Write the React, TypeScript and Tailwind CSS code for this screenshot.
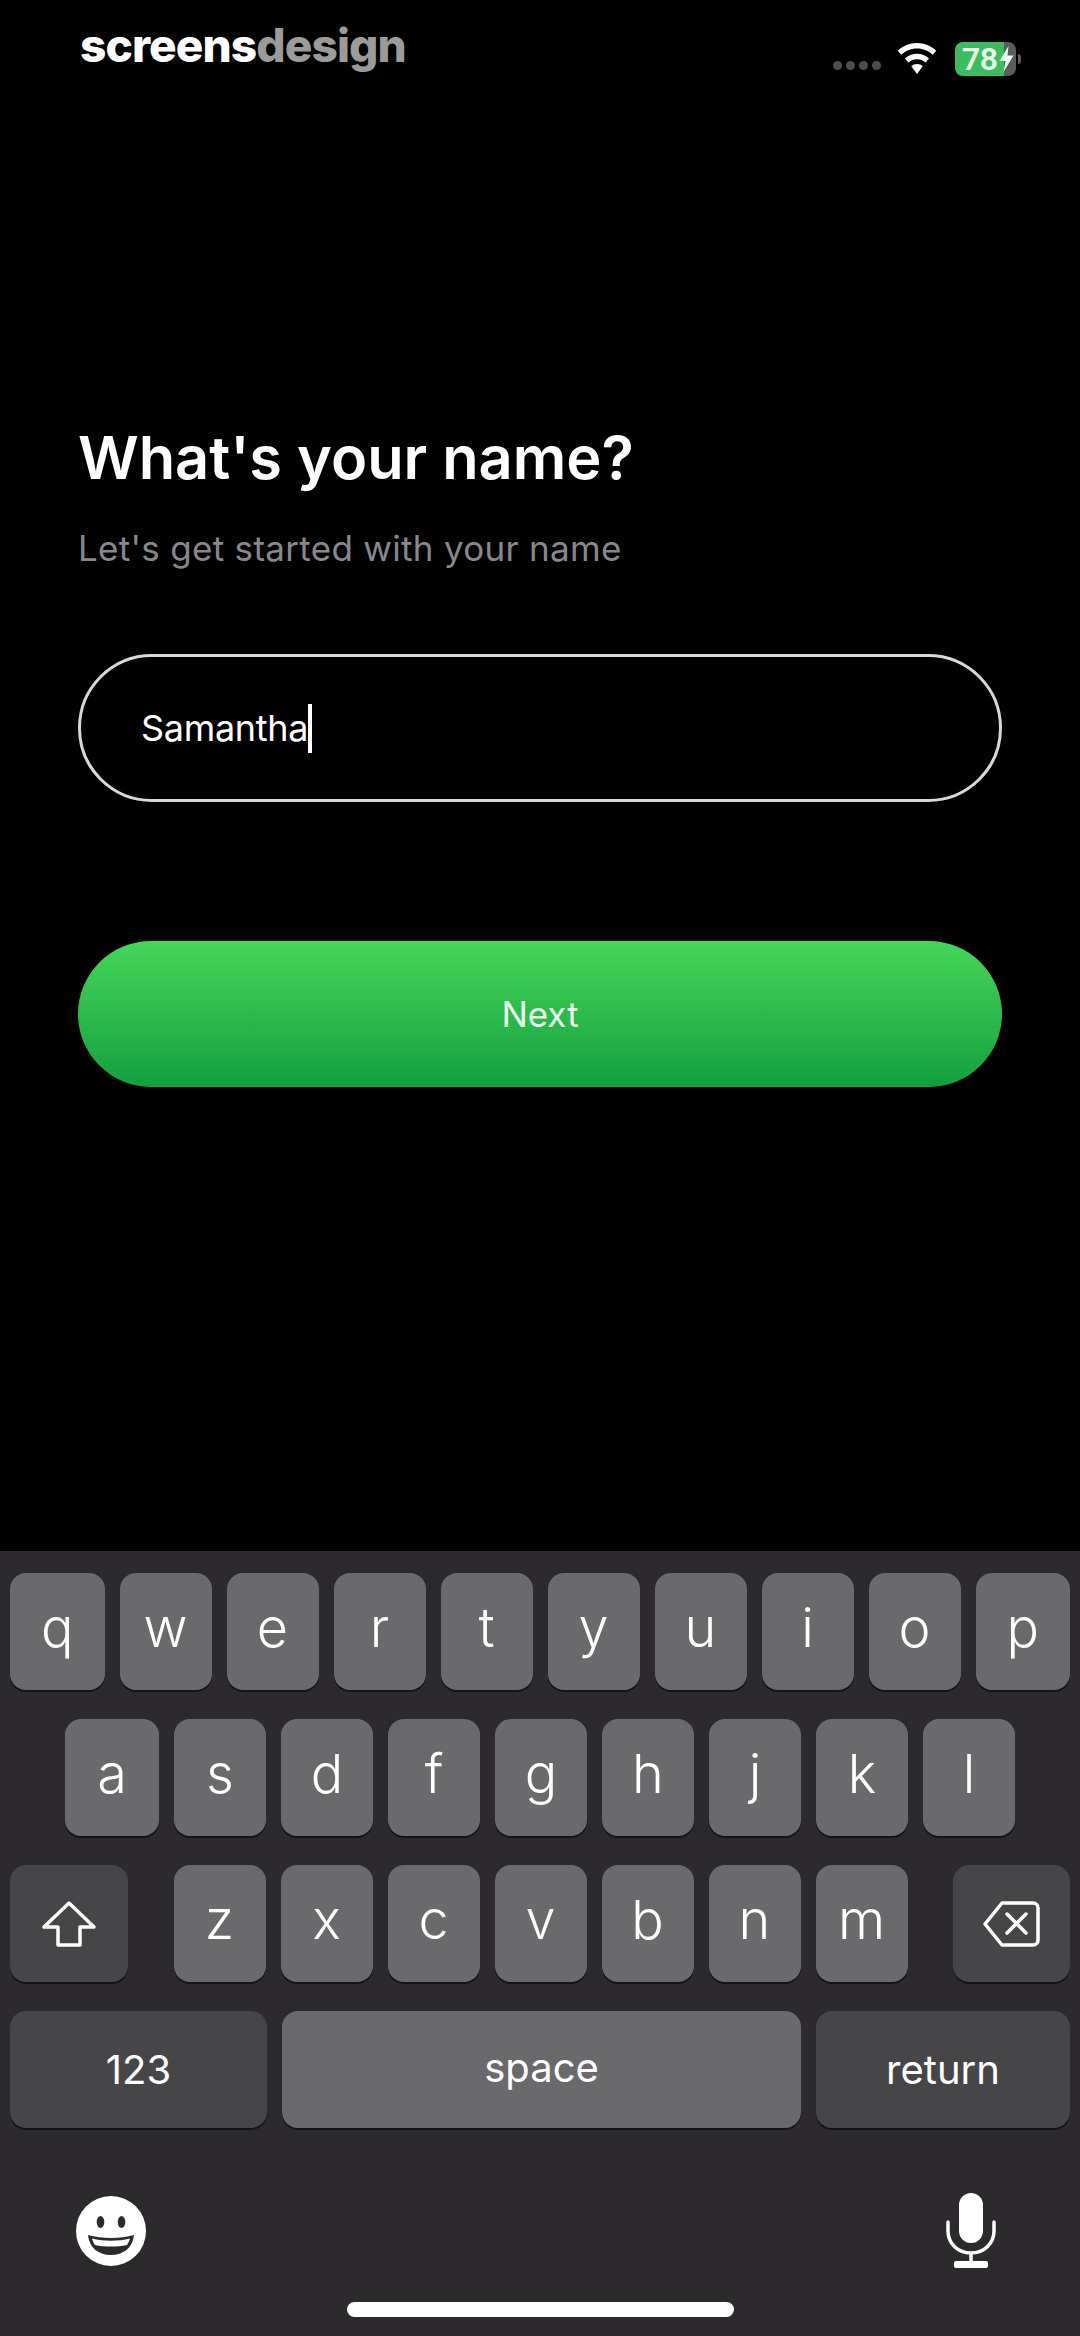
const row1 = ['w', 'e', 'r', 't', 'y', 'u', 'i', 'o']
const row2 = ['s', 'd', 'f', 'g', 'h', 'j', 'k', 'l']
const row3 = ['z', 'x', 'c', 'v', 'b', 'n', 'm']

function LetterKey({ label, className = 'w-[92px]' }: { label: string; className?: string }) {
  return (
    <div
      className={`${className} h-[117px] bg-[#6a696c] rounded-[16px] shadow-[0_2px_0_#141315] flex items-center justify-center text-[54px] font-light text-white pb-[8px]`}
    >
      {label}
    </div>
  )
}

function WifiIcon() {
  return (
    <svg width="40" height="32" viewBox="0 0 40 32" fill="#fff">
      <path d="M20 0C12.500 0 5.800 3 0.800 7.800L4.200 11.800C8.300 7.900 13.800 5.500 20 5.500C26.200 5.500 31.700 7.900 35.800 11.800L39.200 7.800C34.200 3 27.500 0 20 0Z" />
      <path d="M20 10.800C15.400 10.800 11.200 12.600 8 15.600L11.400 19.500C13.700 17.400 16.700 16.200 20 16.200C23.300 16.200 26.300 17.400 28.600 19.500L32 15.600C28.800 12.600 24.600 10.800 20 10.800Z" />
      <path d="M20 21C17.800 21 15.800 21.800 14.300 23.200L20 31L25.700 23.200C24.200 21.800 22.200 21 20 21Z" />
    </svg>
  )
}

function BatteryIcon() {
  return (
    <div className="flex items-center gap-[2px]">
      <div className="w-[61px] h-[34px] rounded-[8px] bg-gradient-to-r from-[#3dbb60] from-80% to-[#5b5b5e] to-80% flex items-center pl-[7px] text-[32px] leading-none font-semibold text-[#e6fbe9] font-['Roboto',sans-serif] tracking-[-0.5px]">
        78
        <svg width="15" height="26" viewBox="0 0 15 26" fill="#e6fbe9" className="ml-[1px] shrink-0">
          <path d="M9.500 0L0.500 15H6.500L4.500 26L14.500 9.500H8.500Z" />
        </svg>
      </div>
      <div className="w-[3px] h-[10px] rounded-r-full bg-[#5b5b5e]" />
    </div>
  )
}

function ShiftIcon() {
  return (
    <svg width="56" height="48" viewBox="0 0 56 48" fill="none" stroke="#fff" strokeWidth="3.500" strokeLinejoin="round">
      <path d="M28 3L3 27H17V45H39V27H53Z" />
    </svg>
  )
}

function DeleteIcon() {
  return (
    <svg width="58" height="48" viewBox="0 0 58 48" fill="none" stroke="#fff" strokeWidth="3.500" strokeLinejoin="round" strokeLinecap="round">
      <path d="M19 3H50C53 3 55 5 55 8V40C55 43 53 45 50 45H19L2 24Z" />
      <path d="M24 14L43 33M43 14L24 33" />
    </svg>
  )
}

function EmojiIcon() {
  return (
    <svg width="72" height="72" viewBox="0 0 72 72">
      <circle cx="36" cy="36" r="35" fill="#fff" />
      <ellipse cx="25.500" cy="27" rx="3.800" ry="6" fill="#2c2a2d" />
      <ellipse cx="46.500" cy="27" rx="3.800" ry="6" fill="#2c2a2d" />
      <path d="M13 40C27 44 45 44 59 40C58 53 48 60 36 60C24 60 14 53 13 40Z" fill="#2c2a2d" />
      <path d="M17 43.500C29 46.500 43 46.500 55 43.500C54 47 53 48.500 52 50C42 52 30 52 20 50C19 48.500 18 47 17 43.500Z" fill="#fff" />
    </svg>
  )
}

function MicIcon() {
  return (
    <svg width="50" height="76" viewBox="0 0 50 76" fill="none">
      <rect x="13" y="0" width="24" height="50" rx="12" fill="#fff" />
      <path d="M2 29V38C2 50.500 12 60 25 60C38 60 48 50.500 48 38V29" stroke="#fff" strokeWidth="3.500" strokeLinecap="round" />
      <path d="M25 60V70" stroke="#fff" strokeWidth="3.500" />
      <rect x="8" y="68" width="34" height="7" rx="2" fill="#fff" />
    </svg>
  )
}

export default function App() {
  return (
    <div className="w-[1080px] h-[2336px] bg-black flex flex-col overflow-hidden font-['Inter',sans-serif] text-white">
      {/* Status bar */}
      <header className="h-[100px] pl-[80px] pr-[59px] flex justify-between items-start">
        <div className="pt-[17px] text-[46px] leading-[56px] font-extrabold tracking-[-0.9px]">
          screens<span className="text-[#9b9b9b]">design</span>
        </div>
        <div className="pt-[42px] flex items-center">
          <div className="flex gap-[4px] mt-[12px] mr-[16px]">
            <div className="w-[9px] h-[9px] rounded-full bg-[#4d4d4d]" />
            <div className="w-[9px] h-[9px] rounded-full bg-[#4d4d4d]" />
            <div className="w-[9px] h-[9px] rounded-full bg-[#4d4d4d]" />
            <div className="w-[9px] h-[9px] rounded-full bg-[#4d4d4d]" />
          </div>
          <WifiIcon />
          <div className="w-[18px]" />
          <BatteryIcon />
        </div>
      </header>

      {/* Form */}
      <main className="px-[78px] pt-[322px]">
        <h1 className="text-[59.5px] leading-[70px] font-semibold">What's your name?</h1>
        <p className="mt-[34px] text-[35px] leading-[44px] text-[#88888c] tracking-[0.3px]">Let's get started with your name</p>

        <div className="mt-[84px] h-[148px] rounded-full border-[3px] border-[#d8d8d8] flex items-center pl-[60px]">
          <span className="text-[36px] leading-[44px] tracking-[-0.3px]">Samantha</span>
          <div className="w-[4px] h-[49px] bg-white" />
        </div>

        <button className="mt-[139px] w-full h-[146px] rounded-full bg-gradient-to-b from-[#45d65a] to-[#0fa03e] text-[35px] text-[#ecfff0]">
          Next
        </button>
      </main>

      {/* Keyboard */}
      <section className="mt-auto h-[785px] bg-[#2c2a2d] px-[10px] pt-[22px] flex flex-col">
        <div className="flex gap-[15px]">
          <LetterKey label="q" className="flex-1" />
          {row1.map((k) => (
            <LetterKey key={k} label={k} />
          ))}
          <LetterKey label="p" className="flex-1" />
        </div>
        <div className="mt-[29px] flex justify-center gap-[15px]">
          <LetterKey label="a" className="w-[94px]" />
          {row2.map((k) => (
            <LetterKey key={k} label={k} />
          ))}
        </div>
        <div className="mt-[29px] flex justify-between">
          <div className="w-[118px] h-[117px] bg-[#464548] rounded-[16px] shadow-[0_2px_0_#141315] flex items-center justify-center">
            <ShiftIcon />
          </div>
          <div className="flex gap-[15px]">
            {row3.map((k) => (
              <LetterKey key={k} label={k} />
            ))}
          </div>
          <div className="w-[117px] h-[117px] bg-[#464548] rounded-[16px] shadow-[0_2px_0_#141315] flex items-center justify-center">
            <DeleteIcon />
          </div>
        </div>
        <div className="mt-[29px] flex gap-[15px] text-[40px]">
          <div className="w-[257px] h-[117px] bg-[#464548] rounded-[16px] shadow-[0_2px_0_#141315] flex items-center justify-center">123</div>
          <div className="flex-1 h-[117px] bg-[#6a696c] rounded-[16px] shadow-[0_2px_0_#141315] flex items-center justify-center pb-[3px]">space</div>
          <div className="w-[254px] h-[117px] bg-[#464548] rounded-[16px] shadow-[0_2px_0_#141315] flex items-center justify-center">return</div>
        </div>
        <div className="mt-[65px] pl-[65px] pr-[74px] flex justify-between items-center">
          <EmojiIcon />
          <MicIcon />
        </div>
        <div className="mt-[33px] mx-auto w-[387px] h-[15px] rounded-full bg-white" />
      </section>
    </div>
  )
}
